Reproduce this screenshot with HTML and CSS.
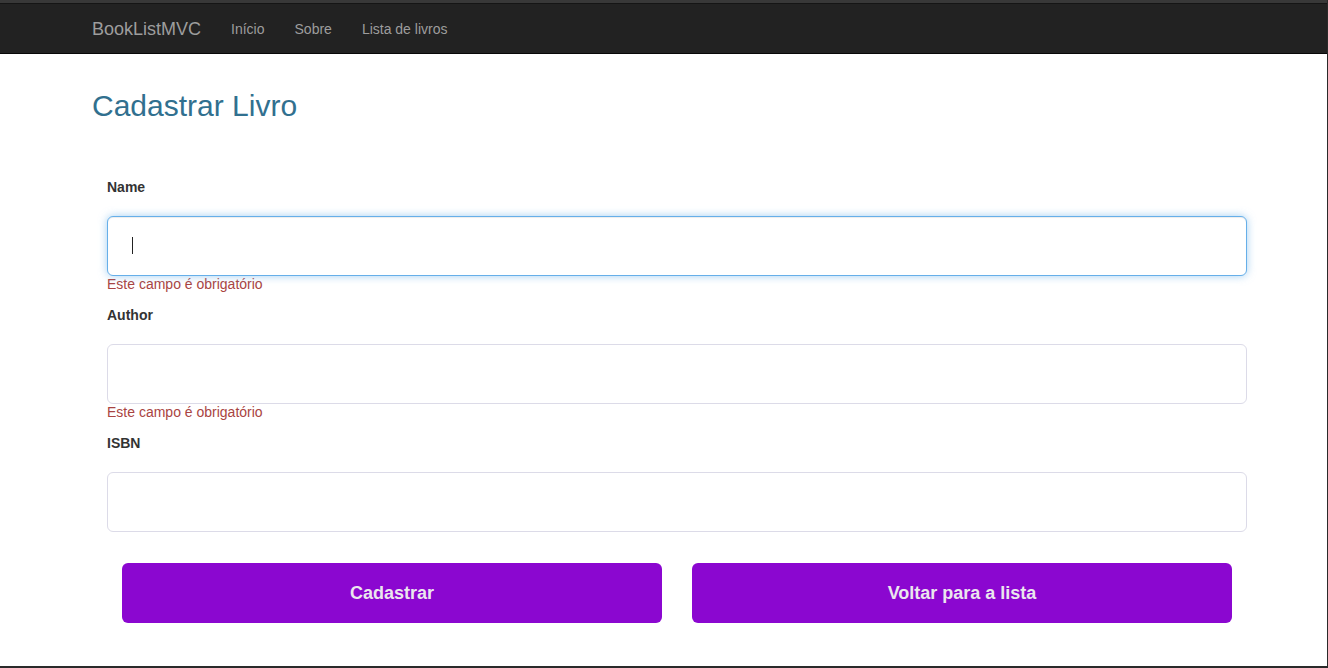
FILE: index.html
```html
<!DOCTYPE html>
<html lang="pt-BR">
<head>
<meta charset="utf-8">
<title>Cadastrar Livro - BookListMVC</title>
<link rel="stylesheet" href="styles.css">
</head>
<body>
<div class="topstrip"></div>
<nav class="navbar">
  <div class="container nav-inner">
    <a class="brand" href="#">BookListMVC</a>
    <ul class="nav-links">
      <li><a href="#">Início</a></li>
      <li><a href="#">Sobre</a></li>
      <li><a href="#">Lista de livros</a></li>
    </ul>
  </div>
</nav>
<main class="container">
  <h2 class="title">Cadastrar Livro</h2>
  <form class="book-form">
    <div class="group">
      <label class="label" for="name">Name</label>
      <div class="field">
        <input class="input focused" id="name" type="text">
        <span class="caret"></span>
      </div>
      <span class="error">Este campo é obrigatório</span>
    </div>
    <div class="group">
      <label class="label" for="author">Author</label>
      <div class="field">
        <input class="input" id="author" type="text">
      </div>
      <span class="error">Este campo é obrigatório</span>
    </div>
    <div class="group last">
      <label class="label" for="isbn">ISBN</label>
      <div class="field">
        <input class="input" id="isbn" type="text">
      </div>
    </div>
    <div class="actions">
      <div class="col"><button type="button" class="btn">Cadastrar</button></div>
      <div class="col"><button type="button" class="btn">Voltar para a lista</button></div>
    </div>
  </form>
</main>
<div class="frame"></div>
</body>
</html>
```
FILE: styles.css
```css
* { box-sizing: border-box; }
html, body { margin: 0; padding: 0; background: #fff; }
body {
  font-family: "Liberation Sans", Arial, sans-serif;
  font-size: 14px;
  color: #333;
  height: 668px;
  overflow: hidden;
}
.topstrip {
  height: 4px;
  background: #383838;
  border-bottom: 1px solid #151515;
}
.navbar {
  height: 50px;
  background: #222;
  border-bottom: 1px solid #080808;
}
.container {
  width: 1170px;
  margin: 0 auto;
  padding: 0 13px 0 13px;
}
.nav-inner {
  display: flex;
  align-items: center;
  height: 49px;
}
.brand {
  font-size: 18px;
  color: #9d9d9d;
  text-decoration: none;
  padding: 0 15px 0 0;
  line-height: 20px;
}
.nav-links {
  display: flex;
  list-style: none;
  margin: 0;
  padding: 0;
}
.nav-links a {
  display: block;
  padding: 0 15px;
  color: #9d9d9d;
  text-decoration: none;
  font-size: 14px;
  line-height: 20px;
}
.title {
  margin: 35px 0 0 0;
  font-size: 30px;
  font-weight: 400;
  line-height: 33px;
  color: #31708f;
}
.book-form {
  padding: 55px 0 0 15px;
  width: 1155px;
}
.group {
  display: flex;
  flex-direction: column;
  margin-bottom: 13px;
}
.group.last { margin-bottom: 31px; }
.label {
  font-weight: 700;
  font-size: 14px;
  line-height: 20px;
  color: #333;
  margin-bottom: 19px;
}
.field { position: relative; }
.input {
  display: block;
  width: 100%;
  height: 60px;
  border: 1px solid #dcdbe8;
  border-radius: 6px;
  background: #fff;
  padding: 0 24px;
  font-family: inherit;
  font-size: 14px;
  outline: none;
  caret-color: transparent;
}
.input.focused {
  border-color: #66afe9;
  box-shadow: inset 0 1px 1px rgba(0,0,0,.075), 0 0 8px rgba(102,175,233,.6);
}
.caret {
  position: absolute;
  left: 25px;
  top: 21px;
  width: 1px;
  height: 17px;
  background: #222;
}
.error {
  font-size: 14px;
  line-height: 16px;
  color: #a94442;
}
.actions {
  display: grid;
  grid-template-columns: 1fr 1fr;
}
.col { padding: 0 15px; }
.btn {
  display: block;
  width: 100%;
  height: 60px;
  border: none;
  border-radius: 6px;
  background: #8b07d0;
  color: #ebe6ee;
  font-family: inherit;
  font-size: 18px;
  font-weight: 700;
  cursor: pointer;
}
.frame {
  position: fixed;
  inset: 0;
  border-right: 1px solid #2a2a2a;
  border-bottom: 2px solid #2a2a2a;
  pointer-events: none;
}
```
